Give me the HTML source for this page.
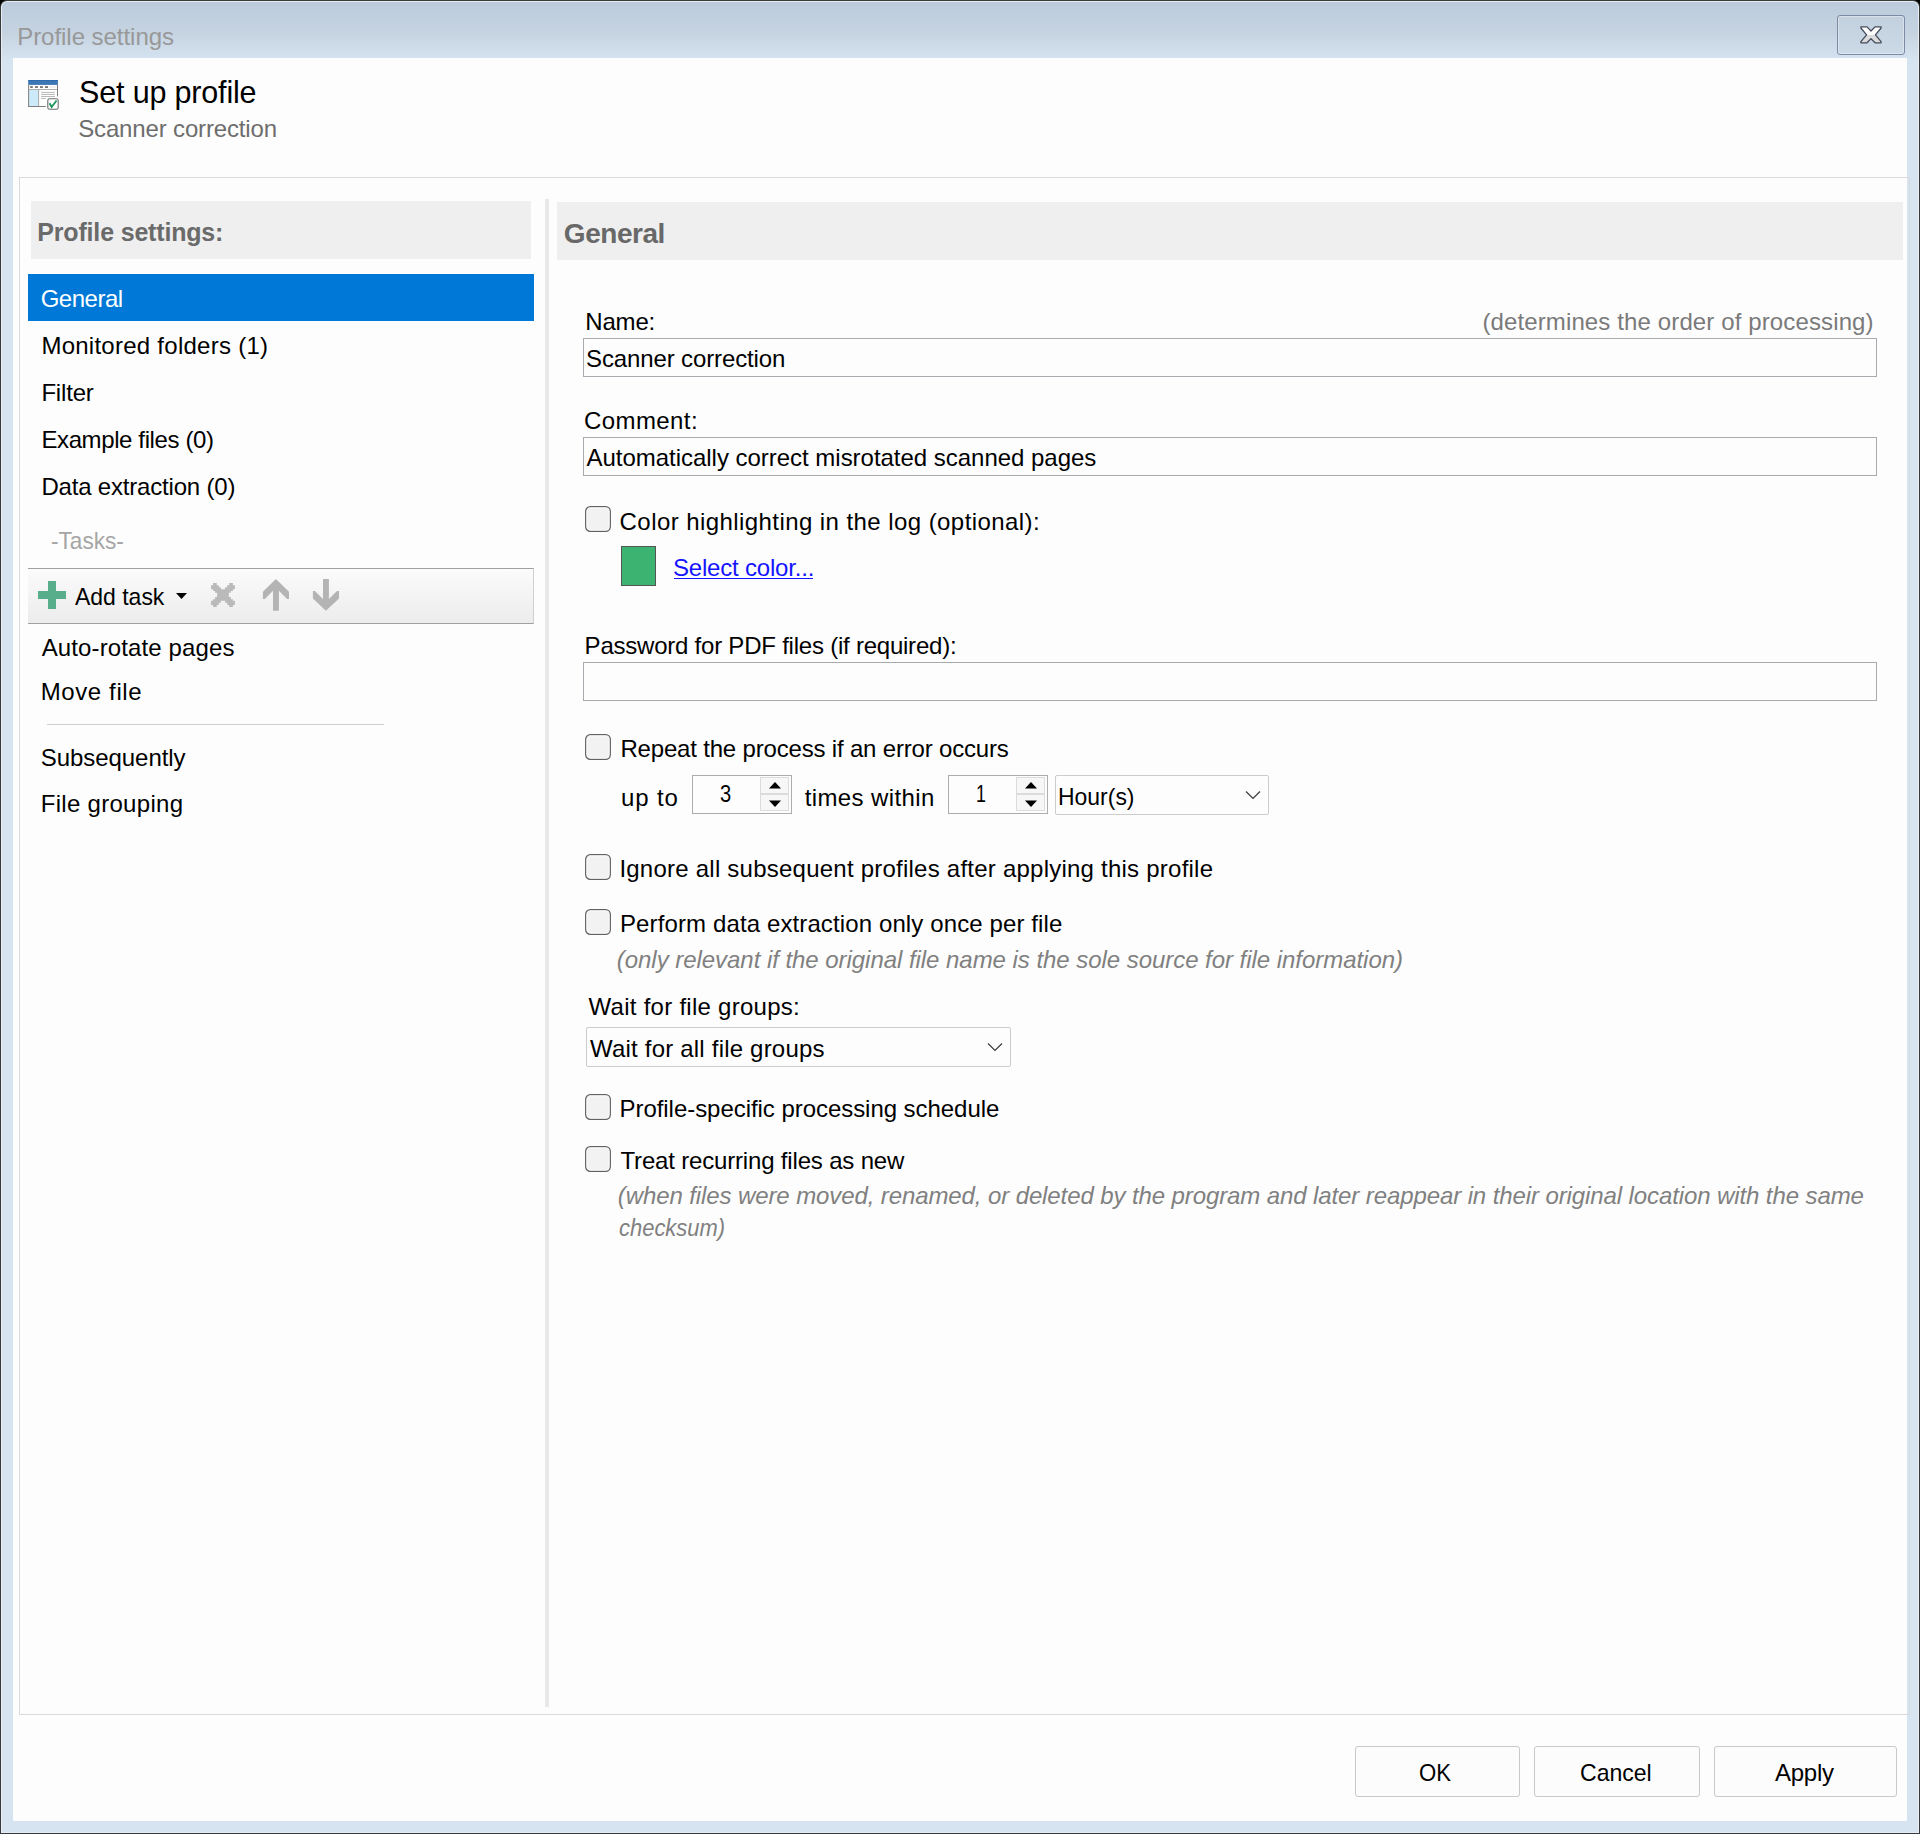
<!DOCTYPE html>
<html><head><meta charset="utf-8"><title>Profile settings</title>
<style>
html,body{margin:0;padding:0;width:1920px;height:1834px;overflow:hidden;background:#000;}
body{position:relative;font-family:"Liberation Sans",sans-serif;}
.b{position:absolute;}
.t{position:absolute;white-space:pre;font-family:"Liberation Sans",sans-serif;}
</style></head><body>
<div class="b" style="left:0px;top:0px;width:1920px;height:1834px;background:#3a3a3a;border-radius:7px 7px 0 0;"></div>
<div class="b" style="left:1px;top:1px;width:1918px;height:1832px;background:#e6edf5;border-radius:6px 6px 0 0;"></div>
<div class="b" style="left:2px;top:2px;width:1916px;height:1830px;background:linear-gradient(to bottom,#bccbdb 0px,#c5d3e1 30px,#d6e3f1 58px,#d6e3f1 100%);border-radius:5px 5px 0 0;"></div>
<div class="b" style="left:13px;top:58px;width:1894px;height:1763px;background:#fdfdfd;"></div>
<div class="t" style="left:17.20px;top:25.18px;font-size:24px;line-height:24px;color:#989898;letter-spacing:-0.040px;">Profile settings</div>
<div class="b" style="left:1837px;top:15px;width:68px;height:40px;border:1px solid #7d8aa3;border-radius:3px;box-sizing:border-box;background:linear-gradient(#c2d0de,#ccd9e6);box-shadow:inset 0 0 0 1px rgba(255,255,255,0.35);"></div>
<svg class="b" style="left:1855px;top:22px" width="32" height="26" viewBox="0 0 32 26"><defs><linearGradient id="xg" x1="0" y1="0" x2="0" y2="26" gradientUnits="userSpaceOnUse"><stop offset="0.5" stop-color="#fdfdfd"/><stop offset="0.5" stop-color="#dbdbdb"/></linearGradient></defs><path d="M5.9 4.9 H12 L16 9 L20 4.9 H26.1 V6 L20.4 12.8 L26.1 19.6 V20.8 H20 L16 16.6 L12 20.8 H5.9 V19.6 L11.6 12.8 L5.9 6 Z" fill="url(#xg)" stroke="#454c5c" stroke-width="1.3" stroke-linejoin="round"/></svg>
<svg class="b" style="left:0;top:0;overflow:visible" width="1" height="1">
<rect x="28.2" y="84.9" width="29.7" height="21.9" fill="#fff"/>
<rect x="28.2" y="80" width="29.7" height="4.9" fill="#3b76b6"/>
<rect x="28.2" y="80" width="29.7" height="0.8" fill="#2f68a8"/>
<rect x="29" y="89.9" width="9.1" height="16.1" fill="#cdeafb"/>
<rect x="28.2" y="84.9" width="0.9" height="21.9" fill="#707070"/>
<rect x="57" y="84.9" width="0.9" height="11.5" fill="#707070"/>
<rect x="28.2" y="106" width="17.6" height="0.9" fill="#707070"/>
<rect x="29" y="89.1" width="28" height="0.9" fill="#a6a6a6"/>
<rect x="38.1" y="89.9" width="1" height="16.1" fill="#a6a6a6"/>
<rect x="30.1" y="86.2" width="2.7" height="1.7" fill="#6a6a6a"/><rect x="35" y="86.2" width="2.9" height="1.7" fill="#6a6a6a"/><rect x="40" y="86.2" width="2.9" height="1.7" fill="#6a6a6a"/><rect x="45" y="86.2" width="3" height="1.7" fill="#6a6a6a"/>
<rect x="49" y="86.1" width="6.7" height="1.9" fill="#f0f0f0"/>
<rect x="41.1" y="91.9" width="13.8" height="0.9" fill="#b2b2b2"/><rect x="41.1" y="93.95" width="13.8" height="0.9" fill="#b2b2b2"/><rect x="41.1" y="96" width="13.8" height="0.9" fill="#b2b2b2"/><rect x="41.1" y="98.05" width="4.7" height="0.9" fill="#b2b2b2"/>
<rect x="47.8" y="98.7" width="10.4" height="10.6" rx="1.8" fill="#fff" stroke="#6e6e6e" stroke-width="1.1"/>
<path d="M49.6 103.2 L51.6 107 L56.6 100.5" fill="none" stroke="#1f9a62" stroke-width="1.9" stroke-linejoin="miter"/>
</svg>
<div class="t" style="left:79.10px;top:77.38px;font-size:30.5px;line-height:30.5px;color:#000;letter-spacing:-0.174px;">Set up profile</div>
<div class="t" style="left:78.20px;top:116.68px;font-size:24px;line-height:24px;color:#6d6d6d;letter-spacing:-0.152px;">Scanner correction</div>
<div class="b" style="left:19px;top:177px;width:1891px;height:1538px;border:1px solid #dadada;box-sizing:border-box;"></div>
<div class="b" style="left:31px;top:201px;width:500px;height:58px;background:#efefef;"></div>
<div class="t" style="left:37.30px;top:220.34px;font-size:25px;line-height:25px;color:#6a6a6a;font-weight:bold;letter-spacing:-0.174px;">Profile settings:</div>
<div class="b" style="left:28px;top:274px;width:506px;height:47px;background:#0078d7;"></div>
<div class="t" style="left:40.70px;top:286.88px;font-size:24px;line-height:24px;color:#fff;letter-spacing:-0.492px;">General</div>
<div class="t" style="left:41.40px;top:333.88px;font-size:24px;line-height:24px;color:#000;letter-spacing:0.258px;">Monitored folders (1)</div>
<div class="t" style="left:41.40px;top:381.18px;font-size:24px;line-height:24px;color:#000;letter-spacing:-0.188px;">Filter</div>
<div class="t" style="left:41.40px;top:427.98px;font-size:24px;line-height:24px;color:#000;letter-spacing:-0.383px;">Example files (0)</div>
<div class="t" style="left:41.40px;top:474.88px;font-size:24px;line-height:24px;color:#000;letter-spacing:-0.190px;">Data extraction (0)</div>
<div class="t" style="left:50.56px;top:528.78px;font-size:24px;line-height:24px;color:#a5a5a5;transform:scaleX(0.9411);transform-origin:0 0;">-Tasks-</div>
<div class="b" style="left:28px;top:568px;width:506px;height:56px;border-top:1px solid #a0a0a0;border-bottom:1px solid #a0a0a0;border-right:1px solid #d0d0d0;box-sizing:border-box;background:linear-gradient(#fbfbfb,#ececec);"></div>
<svg class="b" style="left:37px;top:580px" width="30" height="30" viewBox="0 0 30 30"><path d="M11 1 H19 V11 H29 V19 H19 V29 H11 V19 H1 V11 H11 Z" fill="#58ad8a"/></svg>
<div class="t" style="left:74.90px;top:584.78px;font-size:24px;line-height:24px;color:#000;transform:scaleX(0.9567);transform-origin:0 0;">Add task</div>
<svg class="b" style="left:176px;top:593px" width="11" height="7" viewBox="0 0 11 7"><path d="M0 0 H11 L5.5 6 Z" fill="#000"/></svg>
<svg class="b" style="left:0px;top:0px;overflow:visible" width="1" height="1"><path transform="translate(206 578)" d="M7.05 5 H10.76 V7.24 H12.8 V9.28 H14.84 V11.13 H19.11 V9.28 H21.15 V7.24 H23.19 V5 H26.9 V7.24 H28.94 V11.13 H26.9 V12.99 H24.86 V14.84 H22.82 V19.11 H24.86 V21.15 H26.9 V22.82 H28.94 V26.9 H26.9 V28.94 H23.19 V26.9 H21.15 V24.86 H19.11 V22.82 H14.84 V24.86 H12.8 V26.9 H10.76 V28.94 H7.05 V26.9 H5 V22.82 H7.05 V21.15 H9.09 V19.11 H11.13 V14.84 H9.09 V12.99 H7.05 V11.13 H5 V7.24 H7.05 Z" fill="#bababa"/><path d="M275.9 579 L289 591.8 V599 H287 L278.9 590.8 V610.7 H273 V590.8 L264.9 599 H262.9 V591.8 Z" fill="#b4b4b4"/><path d="M323 579 H328.9 V599 L337 591 H339 V598.6 L325.9 610.7 L312.9 598.6 V591 H314.9 L323 599 Z" fill="#b4b4b4"/></svg>
<div class="t" style="left:41.70px;top:636.18px;font-size:24px;line-height:24px;color:#000;letter-spacing:0.119px;">Auto-rotate pages</div>
<div class="t" style="left:40.70px;top:680.08px;font-size:24px;line-height:24px;color:#000;letter-spacing:0.614px;">Move file</div>
<div class="t" style="left:40.70px;top:746.18px;font-size:24px;line-height:24px;color:#000;letter-spacing:-0.049px;">Subsequently</div>
<div class="t" style="left:40.70px;top:792.48px;font-size:24px;line-height:24px;color:#000;letter-spacing:0.300px;">File grouping</div>
<div class="b" style="left:47px;top:724px;width:337px;height:1px;background:#d0d0d0;"></div>
<div class="b" style="left:545px;top:199px;width:4px;height:1508px;background:#e8e8e8;"></div>
<div class="b" style="left:557px;top:202px;width:1346px;height:58px;background:#efefef;"></div>
<div class="t" style="left:563.80px;top:219.70px;font-size:28px;line-height:28px;color:#686868;font-weight:bold;letter-spacing:-0.449px;">General</div>
<div class="t" style="left:585.30px;top:310.48px;font-size:24px;line-height:24px;color:#000;letter-spacing:-0.180px;">Name:</div>
<div class="t" style="left:1482.40px;top:310.48px;font-size:24px;line-height:24px;color:#7a7a7a;letter-spacing:0.124px;">(determines the order of processing)</div>
<div class="b" style="left:583px;top:338px;width:1294px;height:39px;border:1px solid #a9aab0;box-sizing:border-box;background:#fdfdfd;"></div>
<div class="t" style="left:586.00px;top:347.08px;font-size:24px;line-height:24px;color:#000;letter-spacing:-0.123px;">Scanner correction</div>
<div class="t" style="left:584.00px;top:408.68px;font-size:24px;line-height:24px;color:#000;letter-spacing:0.410px;">Comment:</div>
<div class="b" style="left:583px;top:437px;width:1294px;height:39px;border:1px solid #a9aab0;box-sizing:border-box;background:#fdfdfd;"></div>
<div class="t" style="left:586.50px;top:445.88px;font-size:24px;line-height:24px;color:#000;letter-spacing:-0.025px;">Automatically correct misrotated scanned pages</div>
<svg class="b" style="left:585px;top:506px" width="26" height="26" viewBox="0 0 26 26"><rect x="0.7" y="0.7" width="24.6" height="24.6" rx="4.6" fill="#f2f2f2" stroke="#626262" stroke-width="1.3"/><rect x="2" y="2" width="22" height="22" rx="3.4" fill="none" stroke="#f8f8f8" stroke-width="1"/></svg>
<div class="t" style="left:619.60px;top:509.78px;font-size:24px;line-height:24px;color:#000;letter-spacing:0.429px;">Color highlighting in the log (optional):</div>
<div class="b" style="left:621px;top:546px;width:35px;height:40px;background:#3cb371;border:1px solid #555;box-sizing:border-box;"></div>
<div class="t" style="left:673.00px;top:556.18px;font-size:24px;line-height:24px;color:#1414ff;letter-spacing:-0.193px;">Select color...</div>
<div class="b" style="left:674px;top:578px;width:139px;height:1px;background:#1414ff;"></div>
<div class="t" style="left:584.60px;top:634.18px;font-size:24px;line-height:24px;color:#000;letter-spacing:-0.226px;">Password for PDF files (if required):</div>
<div class="b" style="left:583px;top:662px;width:1294px;height:39px;border:1px solid #a9aab0;box-sizing:border-box;background:#fdfdfd;"></div>
<svg class="b" style="left:585px;top:734px" width="26" height="26" viewBox="0 0 26 26"><rect x="0.7" y="0.7" width="24.6" height="24.6" rx="4.6" fill="#f2f2f2" stroke="#626262" stroke-width="1.3"/><rect x="2" y="2" width="22" height="22" rx="3.4" fill="none" stroke="#f8f8f8" stroke-width="1"/></svg>
<div class="t" style="left:620.40px;top:737.28px;font-size:24px;line-height:24px;color:#000;letter-spacing:-0.179px;">Repeat the process if an error occurs</div>
<div class="t" style="left:621.00px;top:785.68px;font-size:24px;line-height:24px;color:#000;letter-spacing:0.842px;">up to</div>
<div class="b" style="left:692px;top:775px;width:100px;height:39px;border:1px solid #acacac;box-sizing:border-box;background:#fdfdfd;"></div>
<div class="t" style="left:719.60px;top:782.18px;font-size:24px;line-height:24px;color:#000;transform:scaleX(0.8385);transform-origin:0 0;">3</div>
<div class="b" style="left:760px;top:777px;width:29px;height:17px;border:1px solid #dcdcdc;box-sizing:border-box;background:#f7f7f7;"></div>
<div class="b" style="left:760px;top:794px;width:29px;height:17px;border:1px solid #dcdcdc;box-sizing:border-box;background:#f7f7f7;"></div>
<svg class="b" style="left:769px;top:781.5px" width="12" height="7" viewBox="0 0 12 7"><path d="M0 6.5 H12 L6 0 Z" fill="#000"/></svg>
<svg class="b" style="left:769px;top:799.5px" width="12" height="7" viewBox="0 0 12 7"><path d="M0 0.5 H12 L6 7 Z" fill="#000"/></svg>
<div class="t" style="left:804.70px;top:785.68px;font-size:24px;line-height:24px;color:#000;letter-spacing:0.380px;">times within</div>
<div class="b" style="left:948px;top:775px;width:100px;height:39px;border:1px solid #acacac;box-sizing:border-box;background:#fdfdfd;"></div>
<div class="t" style="left:976.16px;top:782.18px;font-size:24px;line-height:24px;color:#000;transform:scaleX(0.7417);transform-origin:0 0;">1</div>
<div class="b" style="left:1016px;top:777px;width:29px;height:17px;border:1px solid #dcdcdc;box-sizing:border-box;background:#f7f7f7;"></div>
<div class="b" style="left:1016px;top:794px;width:29px;height:17px;border:1px solid #dcdcdc;box-sizing:border-box;background:#f7f7f7;"></div>
<svg class="b" style="left:1025px;top:781.5px" width="12" height="7" viewBox="0 0 12 7"><path d="M0 6.5 H12 L6 0 Z" fill="#000"/></svg>
<svg class="b" style="left:1025px;top:799.5px" width="12" height="7" viewBox="0 0 12 7"><path d="M0 0.5 H12 L6 7 Z" fill="#000"/></svg>
<div class="b" style="left:1055px;top:775px;width:214px;height:40px;border:1px solid #cccccc;border-radius:2px;box-sizing:border-box;background:#fdfdfd;"></div>
<svg class="b" style="left:1244.5px;top:790.0px" width="16" height="10" viewBox="0 0 16 10"><path d="M1 1.5 L8 8.5 L15 1.5" fill="none" stroke="#3a3a3a" stroke-width="1.2"/></svg>
<div class="t" style="left:1058.04px;top:784.88px;font-size:24px;line-height:24px;color:#000;transform:scaleX(0.9563);transform-origin:0 0;">Hour(s)</div>
<svg class="b" style="left:585px;top:854px" width="26" height="26" viewBox="0 0 26 26"><rect x="0.7" y="0.7" width="24.6" height="24.6" rx="4.6" fill="#f2f2f2" stroke="#626262" stroke-width="1.3"/><rect x="2" y="2" width="22" height="22" rx="3.4" fill="none" stroke="#f8f8f8" stroke-width="1"/></svg>
<div class="t" style="left:619.40px;top:856.88px;font-size:24px;line-height:24px;color:#000;letter-spacing:0.233px;">Ignore all subsequent profiles after applying this profile</div>
<svg class="b" style="left:585px;top:909px" width="26" height="26" viewBox="0 0 26 26"><rect x="0.7" y="0.7" width="24.6" height="24.6" rx="4.6" fill="#f2f2f2" stroke="#626262" stroke-width="1.3"/><rect x="2" y="2" width="22" height="22" rx="3.4" fill="none" stroke="#f8f8f8" stroke-width="1"/></svg>
<div class="t" style="left:620.00px;top:912.18px;font-size:24px;line-height:24px;color:#000;letter-spacing:0.117px;">Perform data extraction only once per file</div>
<div class="t" style="left:616.80px;top:947.68px;font-size:24px;line-height:24px;color:#808080;font-style:italic;letter-spacing:-0.044px;">(only relevant if the original file name is the sole source for file information)</div>
<div class="t" style="left:588.60px;top:995.48px;font-size:24px;line-height:24px;color:#000;letter-spacing:0.261px;">Wait for file groups:</div>
<div class="b" style="left:586px;top:1027px;width:425px;height:40px;border:1px solid #cccccc;border-radius:2px;box-sizing:border-box;background:#fdfdfd;"></div>
<svg class="b" style="left:986.5px;top:1042.0px" width="16" height="10" viewBox="0 0 16 10"><path d="M1 1.5 L8 8.5 L15 1.5" fill="none" stroke="#3a3a3a" stroke-width="1.2"/></svg>
<div class="t" style="left:590.00px;top:1037.48px;font-size:24px;line-height:24px;color:#000;letter-spacing:0.202px;">Wait for all file groups</div>
<svg class="b" style="left:585px;top:1094px" width="26" height="26" viewBox="0 0 26 26"><rect x="0.7" y="0.7" width="24.6" height="24.6" rx="4.6" fill="#f2f2f2" stroke="#626262" stroke-width="1.3"/><rect x="2" y="2" width="22" height="22" rx="3.4" fill="none" stroke="#f8f8f8" stroke-width="1"/></svg>
<div class="t" style="left:619.50px;top:1097.18px;font-size:24px;line-height:24px;color:#000;letter-spacing:-0.048px;">Profile-specific processing schedule</div>
<svg class="b" style="left:585px;top:1146px" width="26" height="26" viewBox="0 0 26 26"><rect x="0.7" y="0.7" width="24.6" height="24.6" rx="4.6" fill="#f2f2f2" stroke="#626262" stroke-width="1.3"/><rect x="2" y="2" width="22" height="22" rx="3.4" fill="none" stroke="#f8f8f8" stroke-width="1"/></svg>
<div class="t" style="left:620.50px;top:1148.98px;font-size:24px;line-height:24px;color:#000;letter-spacing:-0.175px;">Treat recurring files as new</div>
<div class="t" style="left:617.80px;top:1184.48px;font-size:24px;line-height:24px;color:#808080;font-style:italic;letter-spacing:-0.102px;">(when files were moved, renamed, or deleted by the program and later reappear in their original location with the same</div>
<div class="t" style="left:618.80px;top:1215.68px;font-size:24px;line-height:24px;color:#808080;font-style:italic;transform:scaleX(0.9145);transform-origin:0 0;">checksum)</div>
<div class="b" style="left:1355px;top:1746px;width:165px;height:51px;border:1px solid #c9c9c9;border-radius:3px;box-sizing:border-box;background:#fcfcfc;"></div>
<div class="b" style="left:1534px;top:1746px;width:166px;height:51px;border:1px solid #c9c9c9;border-radius:3px;box-sizing:border-box;background:#fcfcfc;"></div>
<div class="b" style="left:1714px;top:1746px;width:183px;height:51px;border:1px solid #c9c9c9;border-radius:3px;box-sizing:border-box;background:#fcfcfc;"></div>
<div class="t" style="left:1419.48px;top:1761.28px;font-size:24px;line-height:24px;color:#000;transform:scaleX(0.9237);transform-origin:0 0;">OK</div>
<div class="t" style="left:1579.94px;top:1761.28px;font-size:24px;line-height:24px;color:#000;transform:scaleX(0.9603);transform-origin:0 0;">Cancel</div>
<div class="t" style="left:1774.90px;top:1761.28px;font-size:24px;line-height:24px;color:#000;letter-spacing:-0.209px;">Apply</div>
</body></html>
